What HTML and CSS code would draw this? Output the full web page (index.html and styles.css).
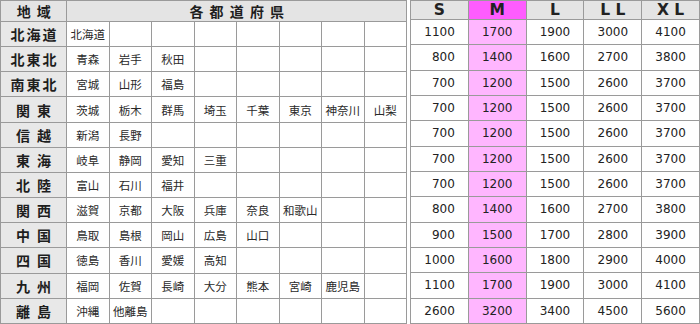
FILE: index.html
```html
<!DOCTYPE html>
<html lang="ja">
<head>
<meta charset="utf-8">
<link rel="stylesheet" href="styles.css">
</head>
<body>
<div class="wrap">
<table class="pref">
<colgroup><col class="c-region"><col span="8" class="c-pref"></colgroup>
<thead>
<tr><th class="hd">地 域</th><th class="hd" colspan="8">各 都 道 府 県</th></tr>
</thead>
<tbody>
<tr><th>北海道</th><td>北海道</td><td></td><td></td><td></td><td></td><td></td><td></td><td></td></tr>
<tr><th>北東北</th><td>青森</td><td>岩手</td><td>秋田</td><td></td><td></td><td></td><td></td><td></td></tr>
<tr><th>南東北</th><td>宮城</td><td>山形</td><td>福島</td><td></td><td></td><td></td><td></td><td></td></tr>
<tr><th>関 東</th><td>茨城</td><td>栃木</td><td>群馬</td><td>埼玉</td><td>千葉</td><td>東京</td><td>神奈川</td><td>山梨</td></tr>
<tr><th>信 越</th><td>新潟</td><td>長野</td><td></td><td></td><td></td><td></td><td></td><td></td></tr>
<tr><th>東 海</th><td>岐阜</td><td>静岡</td><td>愛知</td><td>三重</td><td></td><td></td><td></td><td></td></tr>
<tr><th>北 陸</th><td>富山</td><td>石川</td><td>福井</td><td></td><td></td><td></td><td></td><td></td></tr>
<tr><th>関 西</th><td>滋賀</td><td>京都</td><td>大阪</td><td>兵庫</td><td>奈良</td><td>和歌山</td><td></td><td></td></tr>
<tr><th>中 国</th><td>鳥取</td><td>島根</td><td>岡山</td><td>広島</td><td>山口</td><td></td><td></td><td></td></tr>
<tr><th>四 国</th><td>徳島</td><td>香川</td><td>愛媛</td><td>高知</td><td></td><td></td><td></td><td></td></tr>
<tr><th>九 州</th><td>福岡</td><td>佐賀</td><td>長崎</td><td>大分</td><td>熊本</td><td>宮崎</td><td>鹿児島</td><td></td></tr>
<tr><th>離 島</th><td>沖縄</td><td>他離島</td><td></td><td></td><td></td><td></td><td></td><td></td></tr>
</tbody>
</table>
<table class="price">
<thead>
<tr><th class="hd">S</th><th class="hd m">M</th><th class="hd">L</th><th class="hd">L L</th><th class="hd">X L</th></tr>
</thead>
<tbody>
<tr><td class="s">1100</td><td class="m">1700</td><td>1900</td><td>3000</td><td>4100</td></tr>
<tr><td class="s">800</td><td class="m">1400</td><td>1600</td><td>2700</td><td>3800</td></tr>
<tr><td class="s">700</td><td class="m">1200</td><td>1500</td><td>2600</td><td>3700</td></tr>
<tr><td class="s">700</td><td class="m">1200</td><td>1500</td><td>2600</td><td>3700</td></tr>
<tr><td class="s">700</td><td class="m">1200</td><td>1500</td><td>2600</td><td>3700</td></tr>
<tr><td class="s">700</td><td class="m">1200</td><td>1500</td><td>2600</td><td>3700</td></tr>
<tr><td class="s">700</td><td class="m">1200</td><td>1500</td><td>2600</td><td>3700</td></tr>
<tr><td class="s">800</td><td class="m">1400</td><td>1600</td><td>2700</td><td>3800</td></tr>
<tr><td class="s">900</td><td class="m">1500</td><td>1700</td><td>2800</td><td>3900</td></tr>
<tr><td class="s">1000</td><td class="m">1600</td><td>1800</td><td>2900</td><td>4000</td></tr>
<tr><td class="s">1100</td><td class="m">1700</td><td>1900</td><td>3000</td><td>4100</td></tr>
<tr><td class="s">2600</td><td class="m">3200</td><td>3400</td><td>4500</td><td>5600</td></tr>
</tbody>
</table>
</div>
</body>
</html>
```

FILE: styles.css
```css
html, body {
  margin: 0;
  padding: 0;
  background: #ffffff;
}

.wrap {
  display: flex;
  gap: 3px;
  width: 700px;
  height: 324px;
}

table {
  border-collapse: collapse;
  table-layout: fixed;
  height: 324px;
  color: #222222;
}

th, td {
  border: 1px solid #9a9a9a;
  padding: 0;
  text-align: center;
  vertical-align: middle;
  white-space: nowrap;
}

.pref {
  width: 407px;
  font-family: "Noto Sans CJK JP", sans-serif;
}

.c-region {
  width: 66px;
}

.pref th {
  background: #e8e8e8;
  font-size: 14px;
  font-weight: bold;
  letter-spacing: 2px;
  text-indent: 2px;
  white-space: pre;
  color: #1e1e1e;
}

.pref th.hd {
  background: #e4e4e4;
  letter-spacing: 1.5px;
}

.pref td {
  font-size: 11.5px;
  color: #2a2a2a;
}

.price {
  width: 290px;
  font-family: "DejaVu Sans", sans-serif;
}

.price th {
  background: #e4e4e4;
  font-size: 15.5px;
  font-weight: bold;
  white-space: pre;
}

.price th.m {
  background: #ff5cff;
}

.price td {
  font-size: 12px;
}

.price td.s {
  text-align: right;
  padding-right: 13px;
}

.price td.m {
  background: #ffb6ff;
}
```
